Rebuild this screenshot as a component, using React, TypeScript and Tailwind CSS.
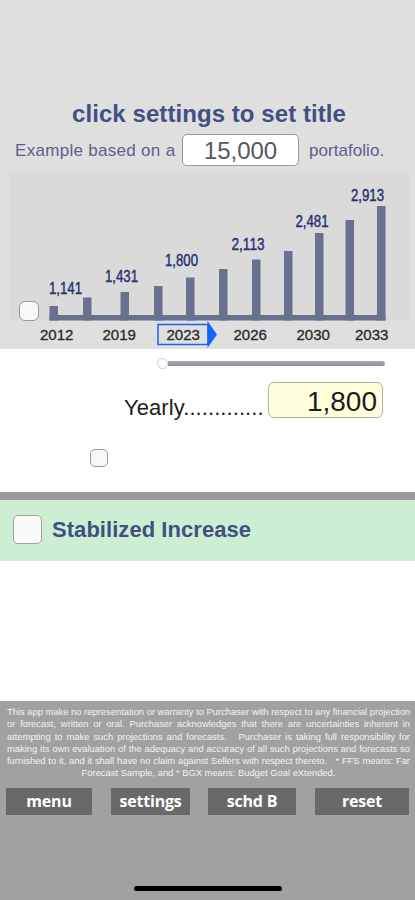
import { useState } from 'react';

const bars = [
  { x: 49.5, top: 306 },
  { x: 83, top: 297.5 },
  { x: 120.5, top: 292 },
  { x: 154, top: 286 },
  { x: 186, top: 277.5 },
  { x: 219, top: 269 },
  { x: 252, top: 259.5 },
  { x: 284, top: 251 },
  { x: 315, top: 233 },
  { x: 345.5, top: 220 },
  { x: 377, top: 206 },
];

const values = [
  { label: '1,141', x: 49, y: 293.5 },
  { label: '1,431', x: 105, y: 281.5 },
  { label: '1,800', x: 165, y: 265.5 },
  { label: '2,113', x: 231.5, y: 250 },
  { label: '2,481', x: 295.5, y: 227 },
  { label: '2,913', x: 351, y: 200.5 },
];

const years = [
  { label: '2012', x: 40 },
  { label: '2019', x: 102.5 },
  { label: '2023', x: 166.5 },
  { label: '2026', x: 233.5 },
  { label: '2030', x: 296.5 },
  { label: '2033', x: 355 },
];

const disclaimer = [
  'This app make no representation or warranty to Purchaser with respect to any financial projection',
  'or forecast, written or oral. Purchaser acknowledges that there are uncertainties inherent in',
  'attempting to make such projections and forecasts. \u00a0 Purchaser is taking full responsibility for',
  'making its own evaluation of the adequacy and accuracy of all such projections and forecasts so',
  'furnished to it, and it shall have no claim against Sellers with respect thereto. \u00a0 * FFS means: Far',
];

function Chart() {
  return (
    <svg width="415" height="176" viewBox="0 173 415 176" className="block">
      <rect x="10" y="173" width="400" height="147" fill="#dadada" />
      <g fill="#69718f">
        {bars.map((bar) => (
          <rect key={bar.x} x={bar.x} y={bar.top} width="8.5" height={320.5 - bar.top} />
        ))}
        <rect x="49.5" y="315" width="336" height="5.5" />
      </g>
      <g fill="#26316f" stroke="#26316f" strokeWidth="0.4" fontSize="16">
        {values.map((v) => (
          <text key={v.label} x={v.x} y={v.y} textLength="33" lengthAdjust="spacingAndGlyphs">
            {v.label}
          </text>
        ))}
      </g>
      <g fill="#2a2a2a" stroke="#2a2a2a" strokeWidth="0.3" fontSize="15">
        {years.map((year) => (
          <text key={year.label} x={year.x} y="339.5" textLength="33.5" lengthAdjust="spacingAndGlyphs">
            {year.label}
          </text>
        ))}
      </g>
      {/* Current year marker */}
      <rect x="158" y="324.5" width="50" height="20" fill="none" stroke="#1c62f0" strokeWidth="1.5" />
      <path d="M207.5 321 L217 334.5 L207.5 348 Z" fill="#0f66f5" />
    </svg>
  );
}

export default function App() {
  const [stabilized, setStabilized] = useState(false);

  return (
    <div className="w-[415px] h-[900px] overflow-hidden bg-white flex flex-col font-['Liberation_Sans',Arial,sans-serif]">
      {/* Header and chart */}
      <header className="h-[349px] shrink-0 bg-[#dfdfdf] pt-[98px]">
        <h1 className="h-8 pl-[3px] text-center text-[24px] leading-8 font-bold tracking-[0.07px] text-[#424f80] whitespace-nowrap">
          click settings to set title
        </h1>
        <div className="mt-[4px] h-[39px] flex items-start text-[#5a628b] text-[17px] leading-[33px] whitespace-nowrap">
          <span className="w-[167px] shrink-0 pl-[15px] tracking-[0.3px]">Example based on a</span>
          <div className="ml-[15px] w-[117px] h-[32px] shrink-0 rounded-[5px] border border-[#999] bg-white text-center text-[24px] leading-[32px] text-[#55585f]">
            15,000
          </div>
          <span className="ml-[10px] tracking-[0.05px]">portafolio.</span>
        </div>
        <div className="relative">
          <Chart />
          <button className="absolute left-[19px] top-[128px] size-5 rounded-[6px] border border-[#999] bg-[#fafafa]" aria-label="show" />
        </div>
      </header>

      {/* Yearly amount */}
      <section className="h-[143px] shrink-0">
        <div className="ml-[157px] pt-[9px] h-[33px] flex items-start">
          <div className="size-[11px] rounded-full border border-[#ccc] bg-white" />
          <div className="mt-[3px] w-[217px] h-[5px] rounded-r-full bg-linear-to-b from-[#a8a8b6] to-[#8e90a3]" />
        </div>
        <div className="h-[37px] flex items-start whitespace-nowrap text-[#1c1c1c]">
          <span className="ml-[124px] w-[144px] shrink-0 mt-[13px] text-[22px] leading-[26px] tracking-[0.08px]">Yearly.............</span>
          <div className="w-[115px] h-[36px] rounded-[6px] border border-[#b2b2a0] bg-[#ffffdc] pr-[5px] text-right text-[28px] leading-[38px]">
            1,800
          </div>
        </div>
        <button className="block ml-[90px] mt-[30px] size-[18px] rounded-[5px] border border-[#999] bg-[#f8f8f8]" aria-label="lock" />
      </section>

      <div className="h-2 shrink-0 bg-[#9c9a9b]" />
      <section className="h-[61px] shrink-0 bg-[#ccefd4] flex items-center">
        <button
          onClick={() => setStabilized(!stabilized)}
          aria-pressed={stabilized}
          aria-label="Stabilized Increase"
          className="ml-[13px] mb-[2px] size-[29px] rounded-[5px] border border-[#a0a0a0] bg-[#fafafa]"
        />
        <span className="ml-[10px] mb-[2px] text-[22px] leading-7 font-bold tracking-[0.05px] text-[#424f80]">Stabilized Increase</span>
      </section>

      {/* Footer */}
      <footer className="mt-[140px] flex-1 bg-[#a1a1a1] pt-[5px] flex flex-col">
        <div className="ml-[7px] w-[403px] text-[9.4px] leading-[12.3px] text-[#f2f2f2] whitespace-nowrap">
          {disclaimer.map((line) => (
            <p key={line} className="[text-align-last:justify]">{line}</p>
          ))}
          <p className="text-center">Forecast Sample, and * BGX means: Budget Goal eXtended.</p>
        </div>
        <div className="mt-[8px] ml-[6px] h-[27px] flex text-center text-[16px] leading-[25px] font-bold tracking-[-0.2px] text-white font-['Open_Sans','Noto_Sans',sans-serif]">
          <button className="w-[86px] bg-[#696969]">menu</button>
          <button className="ml-[19px] w-[79px] bg-[#696969]">settings</button>
          <button className="ml-[18px] w-[88px] bg-[#696969]">schd B</button>
          <button className="ml-[19px] w-[94px] bg-[#696969]">reset</button>
        </div>
        <div className="mt-auto mb-[9px] ml-[134px] w-[148px] h-[5px] rounded-full bg-black" />
      </footer>
    </div>
  );
}
